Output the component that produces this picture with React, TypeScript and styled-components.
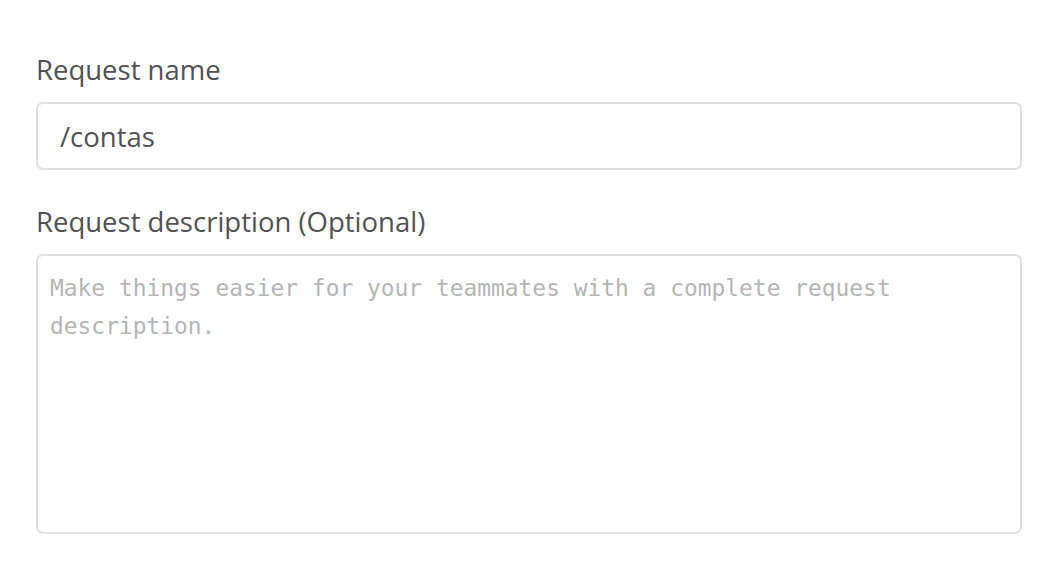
import React from "react";
import styled, { createGlobalStyle } from "styled-components";

const Global = createGlobalStyle`
  html, body { margin: 0; padding: 0; background: #ffffff; }
  body { font-family: "Open Sans", "Noto Sans", sans-serif; }
`;

const Form = styled.div`
  display: flex;
  flex-direction: column;
  padding: 52px 24px 0 36px;
  width: 1046px;
  box-sizing: border-box;
`;

const Field = styled.div<{ $gap?: number }>`
  display: flex;
  flex-direction: column;
  margin-bottom: ${(p) => p.$gap ?? 0}px;
`;

const Label = styled.label`
  font-family: "Open Sans", "Noto Sans", sans-serif;
  font-size: 27.5px;
  line-height: 36px;
  color: #525252;
  margin-bottom: 14px;
`;

const TextInput = styled.input`
  box-sizing: border-box;
  width: 986px;
  height: 68px;
  border: 2px solid #e0e0e0;
  border-radius: 7px;
  padding: 0 22px;
  font-family: "Open Sans", "Noto Sans", sans-serif;
  font-size: 27.5px;
  color: #525252;
  outline: none;
  background: #fff;
`;

const TextArea = styled.textarea`
  box-sizing: border-box;
  width: 986px;
  height: 280px;
  border: 2px solid #e0e0e0;
  border-radius: 7px;
  padding: 13px 12px;
  font-family: "DejaVu Sans Mono", monospace;
  font-size: 22.9px;
  line-height: 38px;
  color: #525252;
  resize: none;
  outline: none;
  background: #fff;
  &::placeholder {
    color: #b5b5b5;
  }
`;

export default function App() {
  return (
    <>
      <Global />
      <Form>
        <Field $gap={34}>
          <Label>Request name</Label>
          <TextInput defaultValue="/contas" />
        </Field>
        <Field>
          <Label>Request description (Optional)</Label>
          <TextArea placeholder="Make things easier for your teammates with a complete request description." />
        </Field>
      </Form>
    </>
  );
}
